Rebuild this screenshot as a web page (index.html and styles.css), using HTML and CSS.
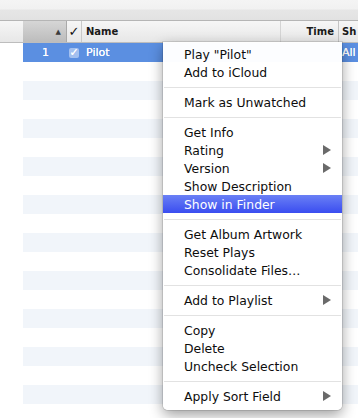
FILE: index.html
```html
<!DOCTYPE html>
<html>
<head>
<meta charset="utf-8">
<link rel="stylesheet" href="styles.css">
</head>
<body>
<div class="app">
  <div class="topbar"></div>
  <div class="header">
    <div class="h-left"></div>
    <div class="h-num"><span class="sort-tri">▲</span></div>
    <div class="h-check">✓</div>
    <div class="h-name">Name</div>
    <div class="h-time">Time</div>
    <div class="h-show">Sh</div>
  </div>
  <div class="rows">
    <div class="row selected">
      <div class="c-left"></div>
      <div class="c-num">1</div>
      <div class="c-check"><span class="cbox">✓</span></div>
      <div class="c-name">Pilot</div>
      <div class="c-time"></div>
      <div class="c-show">All</div>
    </div>
    <div class="row"><div class="c-left"></div><div class="c-rest"></div></div>
    <div class="row"><div class="c-left"></div><div class="c-rest"></div></div>
    <div class="row"><div class="c-left"></div><div class="c-rest"></div></div>
    <div class="row"><div class="c-left"></div><div class="c-rest"></div></div>
    <div class="row"><div class="c-left"></div><div class="c-rest"></div></div>
    <div class="row"><div class="c-left"></div><div class="c-rest"></div></div>
    <div class="row"><div class="c-left"></div><div class="c-rest"></div></div>
    <div class="row"><div class="c-left"></div><div class="c-rest"></div></div>
    <div class="row"><div class="c-left"></div><div class="c-rest"></div></div>
    <div class="row"><div class="c-left"></div><div class="c-rest"></div></div>
    <div class="row"><div class="c-left"></div><div class="c-rest"></div></div>
    <div class="row"><div class="c-left"></div><div class="c-rest"></div></div>
    <div class="row"><div class="c-left"></div><div class="c-rest"></div></div>
    <div class="row"><div class="c-left"></div><div class="c-rest"></div></div>
    <div class="row"><div class="c-left"></div><div class="c-rest"></div></div>
    <div class="row"><div class="c-left"></div><div class="c-rest"></div></div>
    <div class="row"><div class="c-left"></div><div class="c-rest"></div></div>
    <div class="row"><div class="c-left"></div><div class="c-rest"></div></div>
    <div class="row"><div class="c-left"></div><div class="c-rest"></div></div>
  </div>

  <div class="menu">
    <div class="item">Play "Pilot"</div>
    <div class="item">Add to iCloud</div>
    <div class="sep"></div>
    <div class="item">Mark as Unwatched</div>
    <div class="sep"></div>
    <div class="item">Get Info</div>
    <div class="item sub">Rating<svg class="arrow" width="8" height="10" viewBox="0 0 8 10"><path d="M0 0 L8 5 L0 10 Z"/></svg></div>
    <div class="item sub">Version<svg class="arrow" width="8" height="10" viewBox="0 0 8 10"><path d="M0 0 L8 5 L0 10 Z"/></svg></div>
    <div class="item">Show Description</div>
    <div class="item hl">Show in Finder</div>
    <div class="sep"></div>
    <div class="item">Get Album Artwork</div>
    <div class="item">Reset Plays</div>
    <div class="item">Consolidate Files…</div>
    <div class="sep"></div>
    <div class="item sub">Add to Playlist<svg class="arrow" width="8" height="10" viewBox="0 0 8 10"><path d="M0 0 L8 5 L0 10 Z"/></svg></div>
    <div class="sep"></div>
    <div class="item">Copy</div>
    <div class="item">Delete</div>
    <div class="item">Uncheck Selection</div>
    <div class="sep"></div>
    <div class="item sub">Apply Sort Field<svg class="arrow" width="8" height="10" viewBox="0 0 8 10"><path d="M0 0 L8 5 L0 10 Z"/></svg></div>
  </div>
</div>
</body>
</html>
```
FILE: styles.css
```css
html, body {
  margin: 0;
  padding: 0;
  background: #ffffff;
}
.app {
  position: relative;
  width: 358px;
  height: 418px;
  overflow: hidden;
  font-family: "DejaVu Sans", "Liberation Sans", sans-serif;
}
.topbar {
  height: 20px;
  background: linear-gradient(#f4f4f4 0, #f1f1f1 9px, #e6e6e6 10px, #e2e2e2 20px);
  border-bottom: 1px solid #b5b5b5;
}
.header {
  display: flex;
  height: 21px;
  background: linear-gradient(#f6f6f6, #e7e7e7);
  border-bottom: 1px solid #bdbdbd;
  font-size: 10px;
  font-weight: bold;
  color: #1a1a1a;
  line-height: 22px;
}
.h-left {
  width: 23px;
}
.h-num {
  background: linear-gradient(#d6d6d6, #bcbcbc);
  border-right: 1px solid #a9a9a9;
  text-align: right;
  padding-right: 5px;
  box-sizing: border-box;
  width: 44px;
}
.sort-tri {
  font-size: 7px;
  color: #3c3c3c;
  position: relative;
  top: -1px;
}
.h-check {
  width: 14px;
  border-right: 1px solid #c9c9c9;
  text-align: center;
  font-size: 13px;
  color: #111111;
}
.h-name {
  width: 199px;
  padding-left: 4px;
  border-right: 1px solid #d4d4d4;
  box-sizing: border-box;
}
.h-time {
  width: 58px;
  text-align: right;
  padding-right: 4px;
  box-sizing: border-box;
  border-right: 1px solid #c4c4c4;
}
.h-show {
  flex: 1;
  padding-left: 3px;
}
.rows {
  display: flex;
  flex-direction: column;
}
.row {
  display: flex;
  height: 19px;
  line-height: 20px;
  font-size: 11px;
}
.row:nth-child(odd) .c-rest {
  background: #f1f5fa;
}
.c-left {
  width: 23px;
  background: #ffffff;
}
.c-rest {
  flex: 1;
}
.row.selected {
  background: #5b8fe1;
  color: #ffffff;
  text-shadow: 0 0 0.4px #ffffff;
}
.row.selected .c-left {
  background: #ffffff;
}
.c-num {
  width: 44px;
  text-align: right;
  padding-right: 18px;
  box-sizing: border-box;
}
.c-check {
  width: 15px;
  display: flex;
  align-items: center;
  padding-left: 2px;
  box-sizing: border-box;
}
.cbox {
  display: block;
  width: 10px;
  height: 10px;
  background: #a3c0ef;
  border-radius: 2px;
  color: #ffffff;
  font-size: 11px;
  line-height: 10px;
  text-align: center;
  font-weight: bold;
}
.c-name {
  width: 199px;
  padding-left: 4px;
  box-sizing: border-box;
}
.c-time {
  width: 58px;
}
.c-show {
  flex: 1;
  padding-left: 3px;
}
.menu {
  position: absolute;
  left: 163px;
  top: 42px;
  width: 179px;
  padding: 3px 0 5px;
  background: rgba(255, 255, 255, 0.98);
  border-radius: 0 0 5px 5px;
  box-shadow: 0 0 0 1px rgba(0, 0, 0, 0.1), 0 5px 14px rgba(0, 0, 0, 0.38);
  font-size: 12.4px;
  color: #0d0d0d;
  display: flex;
  flex-direction: column;
}
.item {
  height: 18px;
  box-sizing: border-box;
  padding: 2px 11px 0 21px;
  line-height: 16px;
  display: flex;
  justify-content: space-between;
  align-items: center;
  white-space: nowrap;
}
.item.hl {
  background: linear-gradient(#6a80f5, #3a4df0);
  color: #ffffff;
}
.arrow {
  fill: #6a6a6a;
  position: relative;
  top: -1px;
}
.sep {
  height: 12px;
  display: flex;
  align-items: center;
  padding: 0 1px;
}
.sep::before {
  content: "";
  display: block;
  flex: 1;
  height: 1px;
  background: #e2e2e2;
}
```
